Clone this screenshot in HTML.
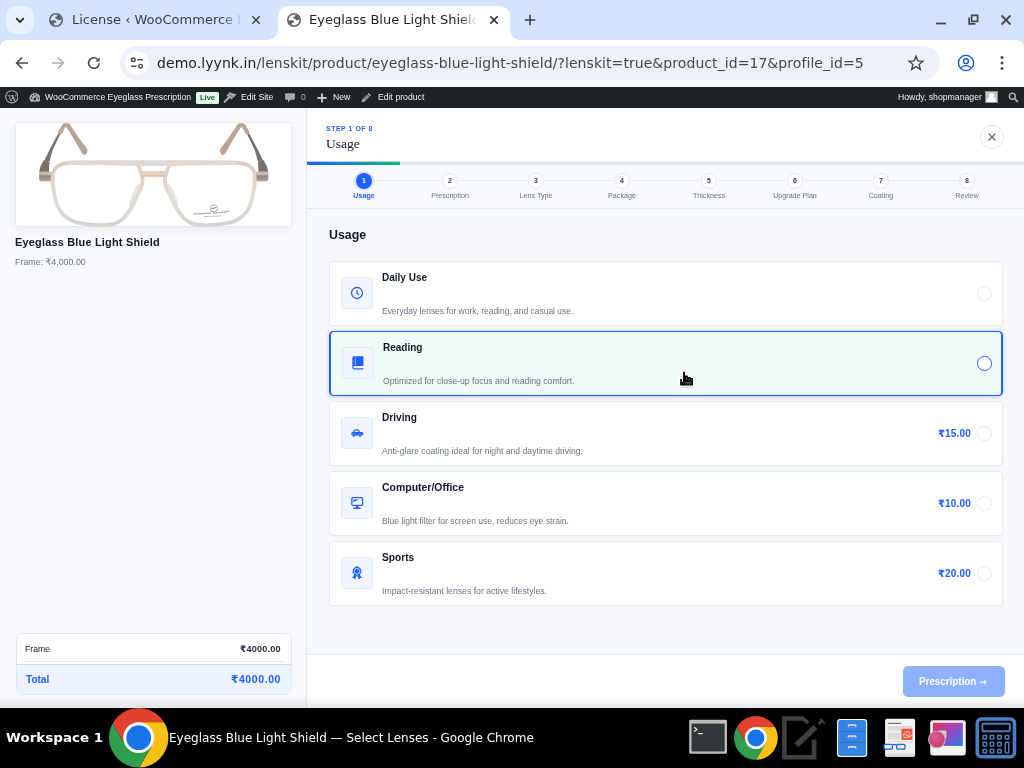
<!DOCTYPE html>
<html lang="en">
<head>
<meta charset="utf-8">
<title>Eyeglass Blue Light Shield — Select Lenses</title>
<style>
*{box-sizing:border-box;margin:0;padding:0}
html,body{width:1024px;height:768px;overflow:hidden;background:#fff}
body{position:relative;font-family:"Liberation Sans","DejaVu Sans",sans-serif;color:#111827}
.abs{position:absolute}
/* ---------- browser chrome ---------- */
#tabstrip{position:absolute;left:0;top:0;width:1024px;height:50px;background:#d3e3fd}
#toolbar{position:absolute;left:0;top:40px;width:1024px;height:47px;background:#fff;border-radius:8px 8px 0 0}
.ui{font-family:"DejaVu Sans","Liberation Sans",sans-serif}
#tabsearch{position:absolute;left:6px;top:6px;width:28px;height:28px;border-radius:10px;background:#e8f0fe}
.tabtitle{transform:scaleX(1.0004);transform-origin:0 0;position:absolute;top:11px;height:18px;line-height:18px;font-size:13px;white-space:nowrap;overflow:hidden}
#tab2{position:absolute;left:278px;top:6px;width:232px;height:34px;background:#fff;border-radius:10px 10px 0 0}
#tab2:before,#tab2:after{content:"";position:absolute;bottom:0;width:10px;height:10px}
#tab2:before{left:-10px;background:radial-gradient(circle at 0 0,rgba(255,255,255,0) 9.5px,#fff 10px)}
#tab2:after{right:-10px;background:radial-gradient(circle at 100% 0,rgba(255,255,255,0) 9.5px,#fff 10px)}
#omni{position:absolute;left:120px;top:46px;width:820px;height:34px;border-radius:17px;background:#edf2fa}
#url{transform:scaleX(1.0004);transform-origin:0 0;position:absolute;left:157px;top:52px;height:22px;line-height:22px;font-size:14px;letter-spacing:.062px;color:#474747;white-space:nowrap}
#url b{font-weight:normal;color:#1f1f1f}
/* ---------- wp admin bar ---------- */
#wpbar{position:absolute;left:0;top:87px;width:1024px;height:21px;background:#1d2327;color:#f0f0f1;font-size:8.7px}
#wpbar span{transform:scaleX(1.0004);transform-origin:0 0;position:absolute;top:0;height:21px;line-height:21px;white-space:nowrap}
/* ---------- page ---------- */
#side{position:absolute;left:0;top:108px;width:306px;height:600px;background:#f8f9fc}
#sideborder{position:absolute;left:306px;top:108px;width:1px;height:600px;background:#e3e8f0}
#main{position:absolute;left:307px;top:108px;width:717px;height:600px;background:#f7f8fc}
#hdr{position:absolute;left:307px;top:108px;width:717px;height:54px;background:#fff}
#prog{position:absolute;left:307px;top:161px;width:717px;height:4px;background:linear-gradient(180deg,#f3f5f9 1px,#e4e9f1 1px)}
#prog i{position:absolute;left:0;top:1px;width:93px;height:3px;background:linear-gradient(90deg,#1f5ffc,#10b981)}
#prog b{position:absolute;left:0;top:0;width:93px;height:1px;opacity:.3;background:linear-gradient(90deg,#1f5ffc,#10b981)}
#stepsline{position:absolute;left:307px;top:208px;width:717px;height:1px;background:#e4e8f0}
#nav{position:absolute;left:307px;top:165px;width:717px;height:43px;background:#f9fafd}
.step{position:absolute;top:172px;width:86.2px;height:32px;text-align:center}
.step .c{position:absolute;left:50%;top:0.6px;width:16px;height:16px;margin-left:-8px;border-radius:50%;background:#fff;border:1px solid #e5e8f0;box-shadow:0 0 0 1.5px #f9fafd;font-size:6.7px;font-weight:bold;line-height:14.4px;color:#374151}
.step .l{position:absolute;left:-10px;right:-10px;top:19.2px;font-size:7.15px;line-height:9px;color:#6b7280;white-space:nowrap}
.step.on .c{background:#1f5ffc;border-color:#1f5ffc;color:#fff;box-shadow:0 0 0 2px #d6e2fc}
.step.on .l{color:#1f5ffc;font-weight:bold}
.card{position:absolute;left:329.5px;width:673px;height:64.2px;background:#fff;border:1px solid #e5e9f1;border-radius:4px}
.card.sel{border:1.34px solid #1f5ffc;background:#f1faf7;box-shadow:0 0 0 2px rgba(37,99,235,.08)}
.ib{position:absolute;left:341px;width:32px;height:32px;border-radius:3.2px;background:#f1f5fe;border:1px solid #e4e9f5}
.t{position:absolute;left:382px;font-size:10.3px;font-weight:bold;line-height:12px;color:#111827;white-space:nowrap}
.d{position:absolute;left:382px;font-size:7.4px;line-height:10px;color:#6b7280;white-space:nowrap}
.radio{position:absolute;left:977.2px;width:14.6px;height:14.6px;border-radius:50%;border:1px solid #e5e7eb;background:#fff}
.price{position:absolute;right:52.5px;font-size:8.8px;font-weight:bold;line-height:12px;color:#1f5ffc;white-space:nowrap}
#foot{position:absolute;left:307px;top:654px;width:717px;height:54px;background:#fff;border-top:1px solid #e2e8f0}
#btn{position:absolute;left:903px;top:666px;width:102px;height:31px;border-radius:5.4px;background:#8eaffb;color:#fff;font-size:8.8px;font-weight:bold;line-height:31px;text-align:center;white-space:nowrap}
#fade{position:absolute;left:0;top:695px;width:1024px;height:13px;background:linear-gradient(180deg,rgba(0,0,0,0) 0,rgba(0,0,0,.012) 3px,rgba(0,0,0,.035) 6px,rgba(0,0,0,.06) 9px,rgba(0,0,0,.085) 12px,rgba(0,0,0,.04) 12px,rgba(0,0,0,.04) 13px)}
/* ---------- taskbar ---------- */
#task{position:absolute;left:0;top:708px;width:1024px;height:60px;background:#000}
</style>
</head>
<body>
<div id="tabstrip"></div>
<div id="toolbar"></div>
<div id="tabsearch"></div>
<svg class="abs" style="left:14px;top:14px" width="12" height="12" viewBox="0 0 12 12"><path d="M2.2 4.2 L6 8 L9.8 4.2" fill="none" stroke="#1f1f1f" stroke-width="1.7"/></svg>
<svg class="abs globe" style="left:49px;top:13px" width="14" height="14" viewBox="0 0 14 14"><circle cx="7" cy="7" r="7" fill="#5f6368"/><circle cx="7" cy="7" r="5.4" fill="#d3e3fd"/><clipPath id="gca"><circle cx="7" cy="7" r="5.6"/></clipPath><g clip-path="url(#gca)" fill="#5f6368"><path d="M7.9 1 L8.2 3.2 L6.3 4 L6.1 5.3 L7.9 5.7 L9 6.9 L10.3 7.3 L11.7 6.7 L13 5.6 L13.5 1 Z"/><path d="M0.5 7.4 L5.6 7.3 L6.9 7.9 L7.4 9.2 L6.4 9.8 L4.8 10 L4.8 11.8 L5.1 13.4 L0.5 13.4 Z"/></g></svg>
<div class="tabtitle ui" style="left:72px;width:168px;color:#3c4043;-webkit-mask-image:linear-gradient(90deg,#000 149px,transparent 171px);mask-image:linear-gradient(90deg,#000 149px,transparent 171px)">License ‹ WooCommerce Eyeglass</div>
<svg class="abs" style="left:251px;top:15px" width="10" height="10" viewBox="0 0 10 10"><path d="M1.3 1.3 L8.7 8.7 M8.7 1.3 L1.3 8.7" stroke="#3c4043" stroke-width="1.5"/></svg>
<div id="tab2"></div>
<svg class="abs globe" style="left:287px;top:13px" width="14" height="14" viewBox="0 0 14 14"><circle cx="7" cy="7" r="7" fill="#5f6368"/><circle cx="7" cy="7" r="5.4" fill="#fff"/><clipPath id="gcb"><circle cx="7" cy="7" r="5.6"/></clipPath><g clip-path="url(#gcb)" fill="#5f6368"><path d="M7.9 1 L8.2 3.2 L6.3 4 L6.1 5.3 L7.9 5.7 L9 6.9 L10.3 7.3 L11.7 6.7 L13 5.6 L13.5 1 Z"/><path d="M0.5 7.4 L5.6 7.3 L6.9 7.9 L7.4 9.2 L6.4 9.8 L4.8 10 L4.8 11.8 L5.1 13.4 L0.5 13.4 Z"/></g></svg>
<div class="tabtitle ui" style="left:309.4px;width:171px;color:#1f1f1f;-webkit-mask-image:linear-gradient(90deg,#000 150px,transparent 168px);mask-image:linear-gradient(90deg,#000 150px,transparent 168px)">Eyeglass Blue Light Shield — Select Lenses</div>
<svg class="abs" style="left:489px;top:15px" width="10" height="10" viewBox="0 0 10 10"><path d="M1.3 1.3 L8.7 8.7 M8.7 1.3 L1.3 8.7" stroke="#1f1f1f" stroke-width="1.5"/></svg>
<svg class="abs" style="left:524px;top:14px" width="12" height="12" viewBox="0 0 12 12"><path d="M6 0.8 V11.2 M0.8 6 H11.2" stroke="#3c4043" stroke-width="1.6"/></svg>
<svg class="abs" style="left:934px;top:10px" width="84" height="20" viewBox="0 0 84 20"><path d="M2 13.5 H12" stroke="#474747" stroke-width="1.8"/><path d="M35.1 7.6 V13.9 H41.4 M37.6 5.3 H43.6 V11.3 H37.6 Z" fill="none" stroke="#474747" stroke-width="1.7"/><path d="M67.5 5.5 L76.5 14.5 M76.5 5.5 L67.5 14.5" stroke="#474747" stroke-width="1.8"/></svg>
<!-- toolbar icons -->
<svg class="abs" style="left:14px;top:55px" width="16" height="16" viewBox="0 0 16 16"><path d="M14 8 H3 M8 2.6 L2.6 8 L8 13.4" fill="none" stroke="#474747" stroke-width="1.6"/></svg>
<svg class="abs" style="left:50px;top:55px" width="16" height="16" viewBox="0 0 16 16"><path d="M2 8 H13 M8 2.6 L13.4 8 L8 13.4" fill="none" stroke="#b0b0b0" stroke-width="1.6"/></svg>
<svg class="abs" style="left:86px;top:55px" width="16" height="16" viewBox="0 0 16 16"><path d="M13.2 8.2 A5.3 5.3 0 1 1 11.6 4.2" fill="none" stroke="#474747" stroke-width="1.6"/><path d="M13.6 2.2 V6.4 H9.4 Z" fill="#474747"/></svg>
<div id="omni"></div>
<div class="abs" style="left:124.8px;top:51px;width:24.2px;height:24.2px;border-radius:50%;background:#fff"></div>
<svg class="abs" style="left:129px;top:55px" width="16" height="16" viewBox="129 55 16 16"><g fill="none" stroke="#474747" stroke-width="1.45"><circle cx="133.3" cy="59.7" r="1.8"/><path d="M137.3 59.7 H142.9"/><circle cx="140.6" cy="66.2" r="1.8"/><path d="M131 66.2 H136.6"/></g></svg>
<div id="url" class="ui"><b>demo.lyynk.in</b>/lenskit/product/eyeglass-blue-light-shield/?lenskit=true&amp;product_id=17&amp;profile_id=5</div>
<svg class="abs" style="left:907px;top:54px" width="18" height="18" viewBox="0 0 18 18"><path d="M9 2.2 L10.9 6.9 L15.9 7.3 L12.1 10.5 L13.3 15.4 L9 12.7 L4.7 15.4 L5.9 10.5 L2.1 7.3 L7.1 6.9 Z" fill="none" stroke="#474747" stroke-width="1.4" stroke-linejoin="miter"/></svg>
<svg class="abs" style="left:957px;top:54px" width="18" height="18" viewBox="0 0 18 18"><g fill="none" stroke="#0b57d0" stroke-width="1.4"><circle cx="9" cy="9" r="7.6"/><circle cx="9" cy="7.2" r="2.4"/><path d="M3.6 14.1 C5.2 12.2 7 11.6 9 11.6 C11 11.6 12.8 12.2 14.4 14.1"/></g></svg>
<svg class="abs" style="left:999px;top:54px" width="6" height="18" viewBox="0 0 6 18"><g fill="#474747"><circle cx="3" cy="3.4" r="1.5"/><circle cx="3" cy="9" r="1.5"/><circle cx="3" cy="14.6" r="1.5"/></g></svg>
<div id="wpbar">
<svg class="abs" style="left:4.5px;top:3.2px" width="13.6" height="13.6" viewBox="0 0 20 20"><circle cx="10" cy="10" r="9" fill="none" stroke="#a7aaad" stroke-width="1.6"/><path d="M3.2 7.2 H7.4 V8 H6.5 L9 15 L10.3 11 L9.2 8 H8.3 V7.2 H13.2 V8 H12.2 L14.7 15 L15.9 11.2 C16.4 9.6 15.6 8.6 15.2 7.6 C15 7 15.5 6.3 16.2 6.3 L17 7.6 L14.6 16.8 H13.8 L11.2 12 L9.4 16.8 H8.4 L5 8 H3.2 Z" fill="#a7aaad"/></svg>
<svg class="abs" style="left:28.6px;top:4.6px" width="11.8" height="10.6" viewBox="0 0 20 18"><path d="M10 1.5 C4.8 1.5 0.8 5.6 0.8 10.6 C0.8 12.8 1.6 14.9 2.9 16.5 H17.1 C18.4 14.9 19.2 12.8 19.2 10.6 C19.2 5.6 15.2 1.5 10 1.5 Z" fill="#a7aaad"/><g fill="#1d2327"><circle cx="4.2" cy="10.6" r="1.2"/><circle cx="5.9" cy="6.4" r="1.2"/><circle cx="10" cy="4.6" r="1.2"/><circle cx="15.8" cy="10.6" r="1.2"/><path d="M14.9 5.4 L11.4 11 C12 11.9 11.8 13.2 10.9 13.8 C10 14.5 8.7 14.2 8.1 13.3 C7.5 12.4 7.7 11.1 8.6 10.5 C9.1 10.1 9.7 10.1 10.2 10.2 Z"/></g></svg>
<span style="left:45.1px">WooCommerce Eyeglass Prescription</span>
<div class="abs" style="left:196px;top:5px;width:23px;height:11.6px;border-radius:1.5px;background:#e6f2e8"></div>
<span style="left:196px;width:23px;text-align:center;color:#1d6b2e;font-weight:bold;font-size:7.5px">Live</span>
<svg class="abs" style="left:220px;top:1px" width="24" height="18" viewBox="220 88 24 18"><path d="M226.4 95.4 L229.6 92.1 L232.4 93.2 L236.6 94.3 L234.4 96.7 L231.7 99.6 L229.3 97.7 Z" fill="#a7aaad"/><path d="M224.7 101.7 L229.2 97.2" stroke="#a7aaad" stroke-width="2.3" stroke-linecap="round"/><path d="M228.7 93.2 L233.2 98" stroke="#1d2327" stroke-width=".55"/></svg>
<span style="left:240.8px">Edit Site</span>
<svg class="abs" style="left:284.5px;top:6.2px" width="10" height="10" viewBox="0 0 10 10"><path d="M1 0.3 H9 C9.5 0.3 9.9 0.7 9.9 1.2 V5.8 C9.9 6.3 9.5 6.7 9 6.7 H5.6 L3 9.6 V6.7 H1 C0.5 6.7 0.1 6.3 0.1 5.8 V1.2 C0.1 0.7 0.5 0.3 1 0.3 Z" fill="#a7aaad"/></svg>
<span style="left:301px;color:#a7aaad">0</span>
<svg class="abs" style="left:317px;top:5.5px" width="10" height="10" viewBox="0 0 10 10"><path d="M5 0.4 V9.6 M0.4 5 H9.6" stroke="#c3c4c7" stroke-width="1.9"/></svg>
<span style="left:332.8px">New</span>
<svg class="abs" style="left:361px;top:5px" width="11" height="11" viewBox="0 0 20 20"><path d="M13.9 1.9 L18.1 6.1 L16 8.2 L11.8 4 Z M10.8 5 L15 9.2 L6.4 17.8 L1.2 18.8 L2.2 13.6 Z" fill="#a7aaad"/><path d="M5 12.6 L11.2 6.4 M7.4 15 L13.6 8.8" stroke="#1d2327" stroke-width="1.1"/></svg>
<span style="left:377.5px">Edit product</span>
<span style="right:42.4px">Howdy, shopmanager</span>
<div class="abs" style="left:985.3px;top:3.6px;width:12.6px;height:12.6px;background:#c8c9cb;border:1px solid #8c8f94;overflow:hidden"><div class="abs" style="left:3.2px;top:1.6px;width:4.4px;height:4.6px;border-radius:50%;background:#fff"></div><div class="abs" style="left:1.2px;top:5.6px;width:8.4px;height:7px;border-radius:4px 4px 0 0;background:#fff"></div></div>
<svg class="abs" style="left:1008px;top:5.4px" width="11" height="11" viewBox="0 0 11 11"><circle cx="4.3" cy="4.3" r="3" fill="none" stroke="#a7aaad" stroke-width="1.5"/><path d="M6.4 6.4 L10 10" stroke="#a7aaad" stroke-width="1.9"/></svg>
</div>
<div id="side"></div>
<div id="sideborder"></div>
<div id="main"></div>
<div id="hdr"></div>
<div id="prog"><b></b><i></i></div>
<div id="nav"></div>
<div id="stepsline"></div>
<div class="abs" style="top:123.00px;font-size:6.90px;line-height:11px;color:#1f5ffc;white-space:nowrap;font-weight:bold;letter-spacing:0.550px;left:326.00px;transform:scaleX(1.0004);transform-origin:0 0;">STEP 1 OF 8</div>
<div class="abs" style="top:135.00px;font-size:12.20px;line-height:18px;color:#111827;white-space:nowrap;font-family:'Liberation Serif',serif;left:326.00px;transform:scaleX(1.1100);transform-origin:0 0;">Usage</div>
<div class="abs" style="left:980.40px;top:124.90px;width:24.00px;height:24.00px;border-radius:50%;border:1px solid #e5e7eb;background:#fff"></div>
<svg class="abs" style="left:988.4px;top:132.9px" width="8" height="8" viewBox="0 0 8 8"><path d="M0.6 0.6 L7.4 7.4 M7.4 0.6 L0.6 7.4" stroke="#475569" stroke-width="1.25"/></svg>
<div class="abs" style="left:372.00px;top:180.00px;width:587.00px;height:1.00px;background:#e4e8f0"></div>
<div class="abs" style="left:355.70px;top:172.60px;width:16.00px;height:16.00px;border-radius:50%;background:#1f5ffc;box-shadow:0 0 0 2.2px #dbe6fe"></div>
<div class="abs" style="top:175.00px;font-size:6.90px;line-height:11px;color:#fff;white-space:nowrap;font-weight:bold;left:263.70px;width:200px;text-align:center;transform:scaleX(1.0004);transform-origin:50% 0;">1</div>
<div class="abs" style="top:190.00px;font-size:7.15px;line-height:12px;color:#1f5ffc;white-space:nowrap;font-weight:bold;left:263.70px;width:200px;text-align:center;transform:scaleX(1.0004);transform-origin:50% 0;">Usage</div>
<div class="abs" style="left:441.90px;top:172.60px;width:16.00px;height:16.00px;border-radius:50%;background:#fff;border:1px solid #e5e8f0;box-shadow:0 0 0 1.5px #f9fafd"></div>
<div class="abs" style="top:175.00px;font-size:6.90px;line-height:11px;color:#374151;white-space:nowrap;font-weight:bold;left:349.90px;width:200px;text-align:center;transform:scaleX(1.0004);transform-origin:50% 0;">2</div>
<div class="abs" style="top:190.00px;font-size:7.15px;line-height:12px;color:#6b7280;white-space:nowrap;left:349.90px;width:200px;text-align:center;transform:scaleX(1.0004);transform-origin:50% 0;">Prescription</div>
<div class="abs" style="left:528.10px;top:172.60px;width:16.00px;height:16.00px;border-radius:50%;background:#fff;border:1px solid #e5e8f0;box-shadow:0 0 0 1.5px #f9fafd"></div>
<div class="abs" style="top:175.00px;font-size:6.90px;line-height:11px;color:#374151;white-space:nowrap;font-weight:bold;left:436.10px;width:200px;text-align:center;transform:scaleX(1.0004);transform-origin:50% 0;">3</div>
<div class="abs" style="top:190.00px;font-size:7.15px;line-height:12px;color:#6b7280;white-space:nowrap;left:436.10px;width:200px;text-align:center;transform:scaleX(1.0004);transform-origin:50% 0;">Lens Type</div>
<div class="abs" style="left:614.30px;top:172.60px;width:16.00px;height:16.00px;border-radius:50%;background:#fff;border:1px solid #e5e8f0;box-shadow:0 0 0 1.5px #f9fafd"></div>
<div class="abs" style="top:175.00px;font-size:6.90px;line-height:11px;color:#374151;white-space:nowrap;font-weight:bold;left:522.30px;width:200px;text-align:center;transform:scaleX(1.0004);transform-origin:50% 0;">4</div>
<div class="abs" style="top:190.00px;font-size:7.15px;line-height:12px;color:#6b7280;white-space:nowrap;left:522.30px;width:200px;text-align:center;transform:scaleX(1.0004);transform-origin:50% 0;">Package</div>
<div class="abs" style="left:700.50px;top:172.60px;width:16.00px;height:16.00px;border-radius:50%;background:#fff;border:1px solid #e5e8f0;box-shadow:0 0 0 1.5px #f9fafd"></div>
<div class="abs" style="top:175.00px;font-size:6.90px;line-height:11px;color:#374151;white-space:nowrap;font-weight:bold;left:608.50px;width:200px;text-align:center;transform:scaleX(1.0004);transform-origin:50% 0;">5</div>
<div class="abs" style="top:190.00px;font-size:7.15px;line-height:12px;color:#6b7280;white-space:nowrap;left:608.50px;width:200px;text-align:center;transform:scaleX(1.0004);transform-origin:50% 0;">Thickness</div>
<div class="abs" style="left:786.70px;top:172.60px;width:16.00px;height:16.00px;border-radius:50%;background:#fff;border:1px solid #e5e8f0;box-shadow:0 0 0 1.5px #f9fafd"></div>
<div class="abs" style="top:175.00px;font-size:6.90px;line-height:11px;color:#374151;white-space:nowrap;font-weight:bold;left:694.70px;width:200px;text-align:center;transform:scaleX(1.0004);transform-origin:50% 0;">6</div>
<div class="abs" style="top:190.00px;font-size:7.15px;line-height:12px;color:#6b7280;white-space:nowrap;left:694.70px;width:200px;text-align:center;transform:scaleX(1.0004);transform-origin:50% 0;">Upgrade Plan</div>
<div class="abs" style="left:872.90px;top:172.60px;width:16.00px;height:16.00px;border-radius:50%;background:#fff;border:1px solid #e5e8f0;box-shadow:0 0 0 1.5px #f9fafd"></div>
<div class="abs" style="top:175.00px;font-size:6.90px;line-height:11px;color:#374151;white-space:nowrap;font-weight:bold;left:780.90px;width:200px;text-align:center;transform:scaleX(1.0004);transform-origin:50% 0;">7</div>
<div class="abs" style="top:190.00px;font-size:7.15px;line-height:12px;color:#6b7280;white-space:nowrap;left:780.90px;width:200px;text-align:center;transform:scaleX(1.0004);transform-origin:50% 0;">Coating</div>
<div class="abs" style="left:959.10px;top:172.60px;width:16.00px;height:16.00px;border-radius:50%;background:#fff;border:1px solid #e5e8f0;box-shadow:0 0 0 1.5px #f9fafd"></div>
<div class="abs" style="top:175.00px;font-size:6.90px;line-height:11px;color:#374151;white-space:nowrap;font-weight:bold;left:867.10px;width:200px;text-align:center;transform:scaleX(1.0004);transform-origin:50% 0;">8</div>
<div class="abs" style="top:190.00px;font-size:7.15px;line-height:12px;color:#6b7280;white-space:nowrap;left:867.10px;width:200px;text-align:center;transform:scaleX(1.0004);transform-origin:50% 0;">Review</div>
<div id="foot"></div>
<div class="abs" style="left:903.00px;top:666.00px;width:102.00px;height:31.00px;border-radius:5.4px;background:#8fb0fd"></div>
<div class="abs" style="top:674.00px;font-size:10.30px;line-height:15px;color:#fff;white-space:nowrap;font-weight:bold;left:918.50px;transform:scaleX(0.9550);transform-origin:0 0;">Prescription <span style="font-family:'DejaVu Sans',sans-serif;font-size:9.6px;letter-spacing:0">→</span></div>
<div class="abs" style="top:226.00px;font-size:12.40px;line-height:18px;color:#111827;white-space:nowrap;font-weight:bold;left:328.70px;transform:scaleX(1.0004);transform-origin:0 0;">Usage</div>
<div class="abs" style="left:329.00px;top:261.00px;width:674.00px;height:65.00px;background:#fff;border:1px solid #e5e9f1;border-radius:4px;box-shadow:0 1px 2px rgba(30,41,59,.04)"></div>
<div class="ib" style="top:277.00px;left:341.00px"><svg class="abs" style="left:6.6px;top:6.6px" width="16" height="16" viewBox="0 0 16 16"><circle cx="8" cy="8" r="5.5" fill="none" stroke="#1f5ffc" stroke-width="1.35"/><path d="M8 4.9 V8.2 L9.9 9.8" fill="none" stroke="#1f5ffc" stroke-width="1.2"/></svg></div>
<div class="abs" style="top:269.00px;font-size:10.50px;line-height:16px;color:#111827;white-space:nowrap;font-weight:bold;left:382.10px;transform:scaleX(0.9530);transform-origin:0 0;">Daily Use</div>
<div class="abs" style="top:304.00px;font-size:9.10px;line-height:14px;color:#6b7280;white-space:nowrap;left:382.10px;transform:scaleX(0.9300);transform-origin:0 0;">Everyday lenses for work, reading, and casual use.</div>
<div class="abs" style="left:977.20px;top:286.10px;width:14.60px;height:14.60px;border-radius:50%;border:1px solid #e5e7eb;background:#fff"></div>
<div class="abs" style="left:329.00px;top:331.00px;width:674.00px;height:65.00px;background:#f1faf7;border:solid #1f5ffc;border-width:1px 2px 1px 2px;border-radius:4.5px;box-shadow:0 0 0 2px rgba(37,99,235,.07),0 2px 5px rgba(30,41,59,.10)"></div>
<div class="ib" style="top:347.00px;left:342.10px"><svg class="abs" style="left:6.6px;top:6.6px" width="16" height="16" viewBox="0 0 16 16"><g transform="translate(8 8) scale(1.13) translate(-7.6 -8.3)"><path d="M4.2 2.4 H12.4 V11 H4.6 C4 11 3.6 11.4 3.6 12 C3.6 12.6 4 13 4.6 13 H12.4 V14 H4.4 C3.3 14 2.6 13.2 2.6 12.2 V4 C2.6 3.1 3.3 2.4 4.2 2.4 Z" fill="#1f5ffc"/><path d="M5.3 3.2 V10.4" stroke="#8fb0fb" stroke-width=".9"/></g></svg></div>
<div class="abs" style="top:339.00px;font-size:10.50px;line-height:16px;color:#111827;white-space:nowrap;font-weight:bold;left:383.20px;transform:scaleX(0.9530);transform-origin:0 0;">Reading</div>
<div class="abs" style="top:374.00px;font-size:9.10px;line-height:14px;color:#6b7280;white-space:nowrap;left:383.20px;transform:scaleX(0.9520);transform-origin:0 0;">Optimized for close-up focus and reading comfort.</div>
<div class="abs" style="left:977.20px;top:356.10px;width:14.60px;height:14.60px;border-radius:50%;border:1.3px solid #1f5ffc;background:#fff"></div>
<div class="abs" style="left:329.00px;top:401.00px;width:674.00px;height:65.00px;background:#fff;border:1px solid #e5e9f1;border-radius:4px;box-shadow:0 1px 2px rgba(30,41,59,.04)"></div>
<div class="ib" style="top:417.00px;left:341.00px"><svg class="abs" style="left:6.6px;top:6.6px" width="16" height="16" viewBox="0 0 16 16"><rect x="2.2" y="7" width="12.2" height="3.5" rx="1.7" fill="#1f5ffc"/><path d="M4.1 7.6 C4.1 5.5 5.7 4.1 7.6 4.1 C9.5 4.1 11 5.5 11 7.6 Z" fill="#1f5ffc"/><path d="M5.5 7 C5.8 5.9 6.6 5.35 7.6 5.35 C8.6 5.35 9.4 5.9 9.7 7 Z" fill="#f3f6fe"/><circle cx="4.9" cy="10.3" r="1.55" fill="#1f5ffc" stroke="#a9c1fb" stroke-width=".5"/><circle cx="11" cy="10.3" r="1.55" fill="#1f5ffc" stroke="#a9c1fb" stroke-width=".5"/></svg></div>
<div class="abs" style="top:409.00px;font-size:10.50px;line-height:16px;color:#111827;white-space:nowrap;font-weight:bold;left:382.10px;transform:scaleX(0.9670);transform-origin:0 0;">Driving</div>
<div class="abs" style="top:444.00px;font-size:9.10px;line-height:14px;color:#6b7280;white-space:nowrap;left:382.10px;transform:scaleX(0.9490);transform-origin:0 0;">Anti-glare coating ideal for night and daytime driving.</div>
<div class="abs" style="left:977.20px;top:426.10px;width:14.60px;height:14.60px;border-radius:50%;border:1px solid #e5e7eb;background:#fff"></div>
<div class="abs" style="top:426.00px;font-size:10.00px;line-height:15px;color:#1f5ffc;white-space:nowrap;font-weight:bold;letter-spacing:0.150px;right:52.70px;transform:scaleX(1.0004);transform-origin:100% 0;">₹15.00</div>
<div class="abs" style="left:329.00px;top:471.00px;width:674.00px;height:65.00px;background:#fff;border:1px solid #e5e9f1;border-radius:4px;box-shadow:0 1px 2px rgba(30,41,59,.04)"></div>
<div class="ib" style="top:487.00px;left:341.00px"><svg class="abs" style="left:6.6px;top:6.6px" width="16" height="16" viewBox="0 0 16 16"><rect x="2.85" y="2.65" width="10.7" height="7.8" rx="1.1" fill="#fbfcff" stroke="#1f5ffc" stroke-width="1.3"/><path d="M4.4 4.4 H10 L4.4 7.2 Z" fill="#1f5ffc"/><path d="M6.9 11 H9.4 V12.6 H11.5 V14 H4.4 V12.6 H6.9 Z" fill="#1f5ffc"/></svg></div>
<div class="abs" style="top:479.00px;font-size:10.50px;line-height:16px;color:#111827;white-space:nowrap;font-weight:bold;left:382.10px;transform:scaleX(0.9970);transform-origin:0 0;">Computer/Office</div>
<div class="abs" style="top:514.00px;font-size:9.10px;line-height:14px;color:#6b7280;white-space:nowrap;left:382.10px;transform:scaleX(0.9386);transform-origin:0 0;">Blue light filter for screen use, reduces eye strain.</div>
<div class="abs" style="left:977.20px;top:496.10px;width:14.60px;height:14.60px;border-radius:50%;border:1px solid #e5e7eb;background:#fff"></div>
<div class="abs" style="top:496.00px;font-size:10.00px;line-height:15px;color:#1f5ffc;white-space:nowrap;font-weight:bold;letter-spacing:0.150px;right:52.70px;transform:scaleX(1.0004);transform-origin:100% 0;">₹10.00</div>
<div class="abs" style="left:329.00px;top:541.00px;width:674.00px;height:65.00px;background:#fff;border:1px solid #e5e9f1;border-radius:4px;box-shadow:0 1px 2px rgba(30,41,59,.04)"></div>
<div class="ib" style="top:557.00px;left:341.00px"><svg class="abs" style="left:6.6px;top:6.6px" width="16" height="16" viewBox="0 0 16 16"><circle cx="8" cy="6.2" r="4.4" fill="#1f5ffc"/><circle cx="8" cy="2" r=".9" fill="#1f5ffc"/><circle cx="8" cy="6.2" r="2.85" fill="none" stroke="#e8eefe" stroke-width=".75"/><path d="M5.4 9.4 L3.1 13.1 L4.9 12.9 L6 14.4 L7.9 10.6 Z M10.6 9.4 L12.9 13.1 L11.1 12.9 L10 14.4 L8.1 10.6 Z" fill="#1f5ffc"/></svg></div>
<div class="abs" style="top:549.00px;font-size:10.50px;line-height:16px;color:#111827;white-space:nowrap;font-weight:bold;left:382.10px;transform:scaleX(0.9680);transform-origin:0 0;">Sports</div>
<div class="abs" style="top:584.00px;font-size:9.10px;line-height:14px;color:#6b7280;white-space:nowrap;left:382.10px;transform:scaleX(0.9545);transform-origin:0 0;">Impact-resistant lenses for active lifestyles.</div>
<div class="abs" style="left:977.20px;top:566.10px;width:14.60px;height:14.60px;border-radius:50%;border:1px solid #e5e7eb;background:#fff"></div>
<div class="abs" style="top:566.00px;font-size:10.00px;line-height:15px;color:#1f5ffc;white-space:nowrap;font-weight:bold;letter-spacing:0.150px;right:52.70px;transform:scaleX(1.0004);transform-origin:100% 0;">₹20.00</div>
<div class="abs" style="left:15.00px;top:122.00px;width:277.00px;height:105.00px;background:#fff;border:1px solid #e4e9f5;border-radius:3px;box-shadow:0 2px 8px rgba(30,50,100,.06)"></div>
<div class="abs" style="top:234.00px;font-size:10.90px;line-height:16px;color:#111827;white-space:nowrap;font-weight:bold;letter-spacing:0.220px;left:14.80px;transform:scaleX(1.0004);transform-origin:0 0;">Eyeglass Blue Light Shield</div>
<div class="abs" style="top:255.00px;font-size:8.90px;line-height:14px;color:#6b7280;white-space:nowrap;left:14.80px;transform:scaleX(1.0004);transform-origin:0 0;">Frame: ₹4,000.00</div>
<div class="abs" style="left:15.5px;top:633px;width:276px;height:61.6px;background:#fff;border:1px solid #dfe6f3;border-radius:6.5px;overflow:hidden"><div class="abs" style="left:0;top:30.2px;width:100%;height:31px;background:#ecf2fe;border-top:1px solid #c9dafb"></div><div class="abs" style="left:5px;right:5.5px;top:26.5px;height:1px;background:#e6eaf2"></div></div>
<div class="abs" style="top:642.00px;font-size:9.10px;line-height:14px;color:#111827;white-space:nowrap;left:25.00px;transform:scaleX(0.9500);transform-origin:0 0;">Frame</div>
<div class="abs" style="top:642.00px;font-size:9.10px;line-height:14px;color:#1f2937;white-space:nowrap;font-weight:bold;letter-spacing:0.200px;right:743.00px;transform:scaleX(1.0004);transform-origin:100% 0;">₹4000.00</div>
<div class="abs" style="top:671.00px;font-size:10.50px;line-height:16px;color:#1f5ffc;white-space:nowrap;font-weight:bold;left:25.50px;transform:scaleX(0.9560);transform-origin:0 0;">Total</div>
<div class="abs" style="top:671.00px;font-size:10.50px;line-height:16px;color:#1f5ffc;white-space:nowrap;font-weight:bold;letter-spacing:0.600px;right:743.00px;transform:scaleX(1.0004);transform-origin:100% 0;">₹4000.00</div>
<div id="fade"></div>
<div id="task"></div>
<svg class="abs" style="left:16px;top:122px" width="276" height="105" viewBox="16 122 276 105">
<defs><linearGradient id="gfr" gradientUnits="userSpaceOnUse" x1="0" y1="160" x2="0" y2="227"><stop offset="0" stop-color="#d9cec7"/><stop offset=".28" stop-color="#e3d3ca"/><stop offset=".6" stop-color="#dfdcd7"/><stop offset="1" stop-color="#d4d4d0"/></linearGradient>
<linearGradient id="ghg" gradientUnits="userSpaceOnUse" x1="0" y1="171" x2="0" y2="182"><stop offset="0" stop-color="#cbbcb0"/><stop offset=".5" stop-color="#9c8b7e"/><stop offset="1" stop-color="#b3a194"/></linearGradient>
<clipPath id="gcl"><rect x="17" y="123.3" width="273.6" height="103.4" rx="2.5"/></clipPath></defs>
<g clip-path="url(#gcl)"><g style="filter:blur(.35px)">
<path d="M58.5 132.9 L60.5 133.8 L52.6 150.0 L49.6 161.2 L44.4 160.4 L49.4 150.0 Z" fill="#77716d"/>
<path d="M58.00 132.60 C57.90 131.47 59.70 128.90 60.60 127.40 C61.50 125.90 62.50 124.35 63.40 123.60 C64.30 122.85 65.07 122.90 66.00 122.90 C66.93 122.90 67.92 122.67 69.00 123.60 C70.08 124.53 70.67 125.85 72.50 128.50 C74.33 131.15 77.62 136.18 80.00 139.50 C82.38 142.82 85.60 146.32 86.80 148.40 C88.00 150.48 87.40 150.97 87.20 152.00 C87.00 153.03 86.23 154.20 85.60 154.60 C84.97 155.00 84.10 154.80 83.40 154.40 C82.70 154.00 82.80 154.43 81.40 152.20 C80.00 149.97 77.50 145.10 75.00 141.00 C72.50 136.90 68.13 129.67 66.40 127.60 C64.67 125.53 65.47 127.50 64.60 128.60 C63.73 129.70 62.30 133.53 61.20 134.20 C60.10 134.87 58.10 133.73 58.00 132.60 Z" fill="#bca295"/>
<path d="M44.1 159.8 L49.5 161.8 L48.8 172.0 L39.2 172.0 L40.6 166.0 Z" fill="#7a716b"/>
<rect x="39.1" y="171.5" width="12.9" height="9.8" rx="2.2" fill="url(#ghg)"/>
<rect x="40.6" y="172.6" width="10.5" height="2" fill="#d8cbc0" opacity=".8"/>
<path d="M248.9 132.9 L246.9 133.8 L254.8 150.0 L257.8 161.2 L263.0 160.4 L258.0 150.0 Z" fill="#77716d"/>
<path d="M249.40 132.60 C249.50 131.47 247.70 128.90 246.80 127.40 C245.90 125.90 244.90 124.35 244.00 123.60 C243.10 122.85 242.33 122.90 241.40 122.90 C240.47 122.90 239.48 122.67 238.40 123.60 C237.32 124.53 236.73 125.85 234.90 128.50 C233.07 131.15 229.78 136.18 227.40 139.50 C225.02 142.82 221.80 146.32 220.60 148.40 C219.40 150.48 220.00 150.97 220.20 152.00 C220.40 153.03 221.17 154.20 221.80 154.60 C222.43 155.00 223.30 154.80 224.00 154.40 C224.70 154.00 224.60 154.43 226.00 152.20 C227.40 149.97 229.90 145.10 232.40 141.00 C234.90 136.90 239.27 129.67 241.00 127.60 C242.73 125.53 241.93 127.50 242.80 128.60 C243.67 129.70 245.10 133.53 246.20 134.20 C247.30 134.87 249.30 133.73 249.40 132.60 Z" fill="#bca295"/>
<path d="M263.3 159.8 L257.9 161.8 L258.6 172.0 L268.2 172.0 L266.8 166.0 Z" fill="#7a716b"/>
<rect x="255.4" y="171.5" width="12.9" height="9.8" rx="2.2" fill="url(#ghg)"/>
<rect x="256.9" y="172.6" width="10.5" height="2" fill="#d8cbc0" opacity=".8"/>
<path d="M139.60 184.20 C140.37 184.53 141.47 186.03 141.20 188.00 C140.93 189.97 139.27 193.17 138.00 196.00 C136.73 198.83 134.87 203.33 133.60 205.00 C132.33 206.67 131.10 206.33 130.40 206.00 C129.70 205.67 129.03 205.00 129.40 203.00 C129.77 201.00 131.40 196.83 132.60 194.00 C133.80 191.17 135.43 187.63 136.60 186.00 C137.77 184.37 138.83 183.87 139.60 184.20 Z" fill="#e6e5e1"/>
<path d="M167.80 184.20 C167.03 184.53 165.93 186.03 166.20 188.00 C166.47 189.97 168.13 193.17 169.40 196.00 C170.67 198.83 172.53 203.33 173.80 205.00 C175.07 206.67 176.30 206.33 177.00 206.00 C177.70 205.67 178.37 205.00 178.00 203.00 C177.63 201.00 176.00 196.83 174.80 194.00 C173.60 191.17 171.97 187.63 170.80 186.00 C169.63 184.37 168.57 183.87 167.80 184.20 Z" fill="#e6e5e1"/>
<path d="M52.80 176.00 C52.92 174.67 53.02 173.21 53.40 172.00 C53.77 170.79 54.15 169.81 55.05 168.75 C55.95 167.69 57.34 166.48 58.80 165.65 C60.26 164.82 61.77 164.24 63.80 163.75 C65.83 163.26 68.30 162.92 71.00 162.70 C73.70 162.48 75.17 162.48 80.00 162.45 C84.83 162.42 91.67 162.46 100.00 162.50 C108.33 162.54 123.80 162.37 130.00 162.70 C136.20 163.03 135.40 162.95 137.20 164.50 C139.00 166.05 139.90 169.42 140.80 172.00 C141.70 174.58 142.53 177.42 142.60 180.00 C142.67 182.58 142.13 184.83 141.20 187.50 C140.27 190.17 138.50 192.93 137.00 196.00 C135.50 199.07 133.87 202.90 132.20 205.90 C130.53 208.90 128.78 211.65 127.00 214.00 C125.22 216.35 123.67 218.37 121.50 220.00 C119.33 221.63 116.92 222.93 114.00 223.80 C111.08 224.67 107.17 225.02 104.00 225.20 C100.83 225.38 98.22 225.12 95.00 224.90 C91.78 224.68 87.70 224.32 84.70 223.90 C81.70 223.48 79.35 223.05 77.00 222.40 C74.65 221.75 72.52 220.97 70.60 220.00 C68.68 219.03 67.05 217.90 65.50 216.60 C63.95 215.30 62.55 213.80 61.30 212.20 C60.05 210.60 58.90 208.87 58.00 207.00 C57.10 205.13 56.47 203.00 55.90 201.00 C55.33 199.00 54.98 196.83 54.60 195.00 C54.22 193.17 53.88 191.67 53.60 190.00 C53.32 188.33 53.05 186.67 52.90 185.00 C52.75 183.33 52.72 181.50 52.70 180.00 C52.68 178.50 52.68 177.33 52.80 176.00 Z" fill="none" stroke="url(#gfr)" stroke-width="3.9" stroke-linejoin="round"/>
<path d="M254.60 176.00 C254.48 174.67 254.37 173.21 254.00 172.00 C253.62 170.79 253.25 169.81 252.35 168.75 C251.45 167.69 250.06 166.48 248.60 165.65 C247.14 164.82 245.63 164.24 243.60 163.75 C241.57 163.26 239.10 162.92 236.40 162.70 C233.70 162.48 232.23 162.48 227.40 162.45 C222.57 162.42 215.73 162.46 207.40 162.50 C199.07 162.54 183.60 162.37 177.40 162.70 C171.20 163.03 172.00 162.95 170.20 164.50 C168.40 166.05 167.50 169.42 166.60 172.00 C165.70 174.58 164.87 177.42 164.80 180.00 C164.73 182.58 165.27 184.83 166.20 187.50 C167.13 190.17 168.90 192.93 170.40 196.00 C171.90 199.07 173.53 202.90 175.20 205.90 C176.87 208.90 178.62 211.65 180.40 214.00 C182.18 216.35 183.73 218.37 185.90 220.00 C188.07 221.63 190.48 222.93 193.40 223.80 C196.32 224.67 200.23 225.02 203.40 225.20 C206.57 225.38 209.18 225.12 212.40 224.90 C215.62 224.68 219.70 224.32 222.70 223.90 C225.70 223.48 228.05 223.05 230.40 222.40 C232.75 221.75 234.88 220.97 236.80 220.00 C238.72 219.03 240.35 217.90 241.90 216.60 C243.45 215.30 244.85 213.80 246.10 212.20 C247.35 210.60 248.50 208.87 249.40 207.00 C250.30 205.13 250.93 203.00 251.50 201.00 C252.07 199.00 252.42 196.83 252.80 195.00 C253.18 193.17 253.52 191.67 253.80 190.00 C254.08 188.33 254.35 186.67 254.50 185.00 C254.65 183.33 254.68 181.50 254.70 180.00 C254.72 178.50 254.72 177.33 254.60 176.00 Z" fill="none" stroke="url(#gfr)" stroke-width="3.9" stroke-linejoin="round"/>
<path d="M70 161.2 L100 160.5 L130 160.2 L177.4 160.2 L207.4 160.5 L237.4 161.2 L237.4 165 L207.4 165.1 L172 166 L135.4 166 L100 165.1 L70 165 Z" fill="#dfd8d3"/>
<path d="M136.6 165.6 L139.4 165.6 L142.6 171 L164.8 171 L168 165.6 L170.8 165.6 L166.4 176.4 L141 176.4 Z" fill="#e4d2c6"/>
<path d="M141.4 175.4 H166 V176.6 H141.4 Z" fill="#d9b9a6"/>
<circle cx="213.9" cy="208.4" r="3.6" fill="none" stroke="#8a8a8a" stroke-width=".7"/>
<path d="M211.6 208.6 L216.2 207.6" stroke="#666" stroke-width=".9"/>
<path d="M193.8 214 L211 213.2 M213.2 213.1 L226 211.8 L229.6 210.9" stroke="#707070" stroke-width="1.3" stroke-dasharray="2.2 .5" opacity=".62"/>
<path d="M204.2 216.6 L221 215.9" stroke="#a0a0a0" stroke-width=".9" stroke-dasharray="1.6 .6"/>
</g></g></svg>
<div class="abs ui" style="left:5.9px;top:729px;font-size:12px;font-weight:bold;line-height:18px;color:#fff;white-space:nowrap;transform:scaleX(1.123);transform-origin:0 0">Workspace 1</div>
<div class="abs ui" style="left:168.7px;top:729px;font-size:12px;line-height:18px;color:#fff;white-space:nowrap;transform:scaleX(1.0003);transform-origin:0 0">Eyeglass Blue Light Shield — Select Lenses - Google Chrome</div>
<svg class="abs" style="left:0;top:708px" width="1024" height="60" viewBox="0 708 1024 60">
<g>
<clipPath id="cca"><circle cx="138.70" cy="737.70" r="29.70"/></clipPath>
<g clip-path="url(#cca)">
<path d="M125.36 745.40 L80.81 668.24 L138.70 648.60 L227.80 722.30 L138.70 722.30 L138.70 737.70 Z" fill="#e2412f"/>
<path d="M138.70 722.30 L227.80 722.30 L215.86 782.25 L107.49 822.56 L152.04 745.40 L138.70 737.70 Z" fill="#fbc016"/>
<path d="M152.04 745.40 L107.49 822.56 L61.54 782.25 L80.81 668.24 L125.36 745.40 L138.70 737.70 Z" fill="#2f9e4f"/>
</g>
<circle cx="138.70" cy="737.70" r="15.40" fill="#fff"/>
<circle cx="138.70" cy="737.70" r="12.40" fill="#1a73e8"/>
</g>
<rect x="689.2" y="719.8" width="37.8" height="34" rx="1.2" fill="#bdbdbb"/>
<rect x="691.6" y="723.6" width="33" height="27.8" fill="#2e3436"/>
<g stroke="#3b4243" stroke-width=".7"><path d="M691.6 725.0 H724.6"/><path d="M691.6 727.2 H724.6"/><path d="M691.6 729.4 H724.6"/><path d="M691.6 731.6 H724.6"/><path d="M691.6 733.8 H724.6"/><path d="M691.6 736.0 H724.6"/><path d="M691.6 738.2 H724.6"/><path d="M691.6 740.4 H724.6"/><path d="M691.6 742.6 H724.6"/><path d="M691.6 744.8 H724.6"/><path d="M691.6 747.0 H724.6"/><path d="M691.6 749.2 H724.6"/></g>
<path d="M694.2 727.2 L697 729.4 L694.2 731.6" fill="none" stroke="#fff" stroke-width="1.1"/><path d="M698.2 733.6 H702.8" stroke="#fff" stroke-width="1.2"/>
<g>
<clipPath id="ccb"><circle cx="755.90" cy="737.90" r="21.90"/></clipPath>
<g clip-path="url(#ccb)">
<path d="M746.37 743.40 L713.52 686.50 L755.90 672.20 L821.60 726.90 L755.90 726.90 L755.90 737.90 Z" fill="#e2412f"/>
<path d="M755.90 726.90 L821.60 726.90 L812.80 770.75 L732.58 800.30 L765.43 743.40 L755.90 737.90 Z" fill="#fbc016"/>
<path d="M765.43 743.40 L732.58 800.30 L699.00 770.75 L713.52 686.50 L746.37 743.40 L755.90 737.90 Z" fill="#2f9e4f"/>
</g>
<circle cx="755.90" cy="737.90" r="11.00" fill="#fff"/>
<circle cx="755.90" cy="737.90" r="8.50" fill="#1a73e8"/>
</g>
<path d="M803.2 718.5 H784.4 V757.3 H814.1 V739.6" fill="none" stroke="#404040" stroke-width="4.6"/>
<path d="M802.4 718.2 L808.4 723" stroke="#404040" stroke-width="3.6"/>
<path d="M796.4 745.2 L815.4 727.0" stroke="#404040" stroke-width="5.6"/>
<path d="M818.6 724 L822.8 720" stroke="#404040" stroke-width="3"/><path d="M820 718.6 L825 724" stroke="#383838" stroke-width="1.6"/>
<rect x="837" y="719" width="30.2" height="38" rx="3.2" fill="#fff"/>
<rect x="838.1" y="720.1" width="28" height="35.8" rx="2.3" fill="#3584e4"/>
<path d="M838.1 731.4 H866.1 M838.1 742.3 H866.1" stroke="#2a6fc9" stroke-width=".9"/>
<rect x="847.8" y="724.2" width="8.6" height="3" rx="1" fill="#dedad4"/><rect x="848.8" y="725.9" width="6.6" height="1.4" fill="#3584e4"/>
<rect x="847.8" y="735.2" width="8.6" height="3" rx="1" fill="#dedad4"/><rect x="848.8" y="736.9" width="6.6" height="1.4" fill="#3584e4"/>
<rect x="847.8" y="746.1" width="8.6" height="3" rx="1" fill="#dedad4"/><rect x="848.8" y="747.8" width="6.6" height="1.4" fill="#3584e4"/>
<rect x="885.1" y="718.7" width="30" height="38" rx="2" fill="#f3f2f0"/>
<rect x="885.1" y="753.5" width="30" height="3.2" rx="1.6" fill="#dddbd8"/>
<path d="M887.8 723.3 H901.2" stroke="#5a5a5e" stroke-width="1"/>
<rect x="887.8" y="726" width="24.4" height="4.6" fill="#dddbd7"/><rect x="887.8" y="732.6" width="12" height="7" fill="#dddbd7"/><rect x="887.8" y="741.2" width="24.4" height="1" fill="#dddbd7"/>
<rect x="901.4" y="728.8" width="11" height="11.1" fill="#f1543f"/>
<path d="M904 736.6 C903 733.6 905.4 731.2 908 731.6 C910 732 910.2 734.6 908.2 735.6 C906.6 736.4 905.4 735 906.2 733.8 M903.6 737.4 C906.4 737.8 909.6 737 911.8 735.4" fill="none" stroke="#fff" stroke-width=".8"/>
<g fill="#e9eef7" stroke="#2a66c8" stroke-width="1.3"><rect x="884" y="744.4" width="8.4" height="4.8" rx="1.2"/><rect x="896.6" y="744.4" width="8.4" height="4.8" rx="1.2"/></g><path d="M892.4 745.6 C893.6 744 895.4 744 896.6 745.6" fill="none" stroke="#2a66c8" stroke-width="1.1"/>
<defs><linearGradient id="giv" x1="0" y1="0" x2="1" y2="1"><stop offset="0" stop-color="#e8314f"/><stop offset=".5" stop-color="#9b46c6"/><stop offset="1" stop-color="#2383e2"/></linearGradient><radialGradient id="gmg" cx=".4" cy=".35" r=".7"><stop offset="0" stop-color="#e2598f"/><stop offset="1" stop-color="#c93a76"/></radialGradient></defs>
<rect x="930.2" y="720.2" width="35.6" height="35.3" rx="3" fill="#f4f3f1"/>
<rect x="932.9" y="722.8" width="29.9" height="23.1" fill="url(#giv)"/>
<rect x="938" y="730.4" width="8.4" height="8" rx="1" fill="#cfcdca"/>
<circle cx="936.9" cy="739.6" r="8.9" fill="#bdbbb7"/><circle cx="936.9" cy="739.3" r="7.9" fill="url(#gmg)"/>
<g fill="none" stroke="#4a7fc0"><rect x="977.3" y="719" width="37.2" height="37.7" rx="4" stroke-width="3.6"/><rect x="982.4" y="723.7" width="27.4" height="7.6" rx="1" stroke-width="1.9"/>
<rect x="983.0" y="735.4" width="3.6" height="3.6" rx=".6" stroke-width="1.5"/>
<rect x="990.2" y="735.4" width="3.6" height="3.6" rx=".6" stroke-width="1.5"/>
<rect x="997.6" y="735.4" width="3.6" height="3.6" rx=".6" stroke-width="1.5"/>
<rect x="1005.2" y="735.4" width="3.6" height="3.6" rx=".6" stroke-width="1.5"/>
<rect x="983.0" y="742.3" width="3.6" height="3.6" rx=".6" stroke-width="1.5"/>
<rect x="990.2" y="742.3" width="3.6" height="3.6" rx=".6" stroke-width="1.5"/>
<rect x="997.6" y="742.3" width="3.6" height="3.6" rx=".6" stroke-width="1.5"/>
<rect x="983.0" y="749.5" width="3.6" height="3.6" rx=".6" stroke-width="1.5"/>
<rect x="990.2" y="749.5" width="3.6" height="3.6" rx=".6" stroke-width="1.5"/>
<rect x="997.6" y="749.5" width="3.6" height="3.6" rx=".6" stroke-width="1.5"/>
<rect x="1005.3" y="742.3" width="3.4" height="10.8" rx=".6" stroke-width="1.5"/></g>
</svg>
<svg class="abs" style="left:676px;top:368px" width="22" height="22" viewBox="676 368 22 22"><path d="M683.1 371.8 H685 V375.6 H687.8 V376.9 H690.6 V378 H693 V385.6 H680.2 V379 H682 V382 H683.1 Z" fill="#000" stroke="#fff" stroke-width="2" stroke-linejoin="round" paint-order="stroke"/><path d="M686.4 377 V380 M689.1 378 V380.4 M691.6 379.2 V381" stroke="#fff" stroke-width=".7" opacity=".55"/><path d="M684.4 382.6 H691.6 M685.2 383.8 H691.6" stroke="#bbb" stroke-width=".8" stroke-dasharray="1 1"/><path d="M681.4 387.2 H693.6" stroke="#999" stroke-width=".8" opacity=".6"/></svg>

</body>
</html>
